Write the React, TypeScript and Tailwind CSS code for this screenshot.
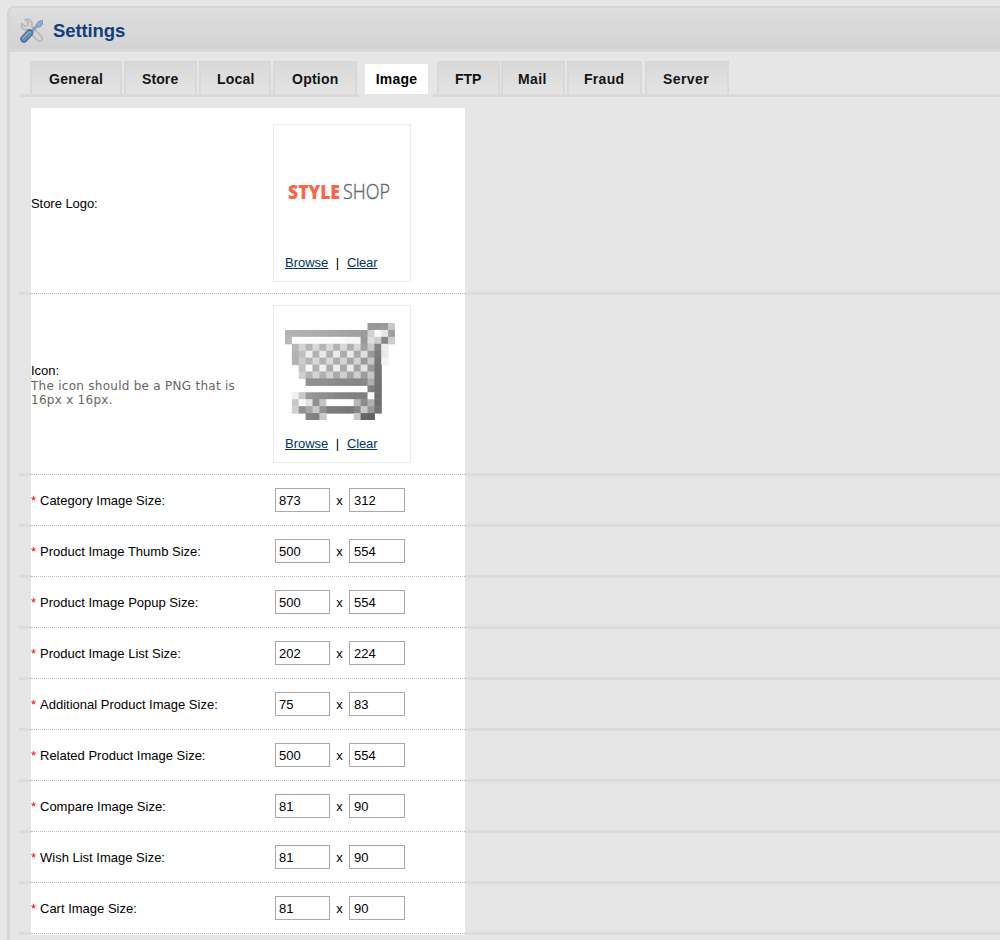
const cartRows: string[] = [
  "-- -- -- -- -- -- -- -- -- -- -- -- 98 98 9a c8",
  "b4 b2 b0 ae ac aa a8 a6 a4 a2 a0 9c d0 f8 e6 a0",
  "b8 fd fd fd fd fd fc fb fa f8 f6 98 de cc 88 cc",
  "-- b8 d4 b6 d8 b4 d8 b2 d8 b0 d6 a0 c8 84 ec --",
  "-- b2 c0 ee b2 ea b0 ea ac e8 a8 e0 9a 7c ea --",
  "-- b2 cc b4 d8 b2 d8 ac d4 a6 d2 9a c6 78 f4 --",
  "-- -- c2 f8 b2 f0 ac ee a8 ea a4 e2 98 76 -- --",
  "-- -- d0 b2 d4 b0 d2 aa d0 a4 ce 9c c6 74 -- --",
  "-- -- -- 90 90 8e 8c 8a 88 88 86 88 b0 72 -- --",
  "-- -- -- -- -- -- -- -- -- -- -- -- 80 72 -- --",
  "-- f0 c8 98 92 8e 8a 86 84 82 80 7e fd 70 -- --",
  "-- c8 fc e4 90 c4 fd fd fd fd b8 8c b0 70 -- --",
  "-- d0 92 a8 c8 92 7c 7a 78 76 88 c8 98 74 -- --",
  "-- -- -- 84 80 c8 -- -- -- -- c8 66 62 -- -- --",
];

function Cart() {
  return (
    <svg className="block h-[97px] w-[110px]" viewBox="0 0 16 14" preserveAspectRatio="none">
      {cartRows.flatMap((row, y) =>
        row.split(" ").map((v, x) =>
          v === "--" ? null : <rect key={`${x}-${y}`} x={x} y={y} width={1.08} height={1.08} fill={`#${v}${v}${v}`} />
        )
      )}
    </svg>
  );
}

function Tools() {
  return (
    <svg className="mt-[4px] h-[28px] w-[26px] shrink-0" viewBox="0 0 26 28" fill="none">
      <path
        d="M6 2.500 L9.500 5.500 L8.500 8.500 L5.500 9 L3 6.500 C1 10 4 13.500 8 12.500 L17.500 22.500 C21 25.500 25 23.500 22.500 19.500 L13 9.500 C14 5 11 1 6 2.500 Z"
        fill="#d6d6d6"
        stroke="#b8b8b8"
        strokeWidth="1.700"
        strokeLinejoin="round"
      />
      <path d="M12 15 L19 8" stroke="#8ba1c0" strokeWidth="3.200" />
      <path d="M17 8 L19.500 4.500 L23.500 3.500 L23.500 7.500 L20.500 10.500 Z" fill="#8fa9cb" stroke="#7f9bc2" strokeLinejoin="round" />
      <path d="M5 22 L10.500 16" stroke="#4f72a2" strokeWidth="7.500" strokeLinecap="round" />
      <path d="M5 21.500 L10.500 16" stroke="#88a5cb" strokeWidth="4" strokeLinecap="round" />
      <path d="M5 22.500 L11 16.500" stroke="#5f82b0" strokeWidth="1.400" strokeLinecap="round" />
    </svg>
  );
}

const tabs = [
  { label: "General", box: "w-[92px] pl-[17px]", text: "tracking-[0.3px]" },
  { label: "Store", box: "ml-[2px] w-[73px] pl-[16px]", text: "tracking-[0.1px]" },
  { label: "Local", box: "ml-[2px] w-[72px] pl-[16px]", text: "tracking-[0.2px]" },
  { label: "Option", box: "ml-[2px] w-[84px] pl-[17px]", text: "tracking-[0.25px]" },
  { label: "Image", box: "", text: "" },
  { label: "FTP", box: "ml-[4px] w-[63px] pl-[16px]", text: "tracking-[-0.1px]" },
  { label: "Mail", box: "ml-px w-[64px] pl-[15px]", text: "tracking-[0.35px]" },
  { label: "Fraud", box: "ml-[2px] w-[75px] pl-[15px]", text: "tracking-[0.3px]" },
  { label: "Server", box: "ml-[3px] w-[84px] pl-[16px]", text: "tracking-[0.4px]" },
];

function Tabs() {
  return (
    <div className="ml-[10px] flex h-[36px] border-b-[3px] border-[#dadada] pl-[10px]">
      {tabs.map((t) =>
        t.label === "Image" ? (
          <div key={t.label} className="-mb-[3px] ml-[2px] flex h-[36px] w-[74px] bg-[#e6e6e6] pl-[6px] pt-[3px]">
            <div className="flex h-[30px] w-[63px] items-center justify-center bg-white text-[14px] font-bold tracking-[0.2px] text-black">
              {t.label}
            </div>
          </div>
        ) : (
          <div
            key={t.label}
            className={`flex h-[33px] items-center whitespace-nowrap border-x-2 border-t-2 border-[#d8d8d8] bg-linear-to-b from-[#d9d9d9] to-[#e4e4e4] pt-[2px] text-[14px] font-bold text-[#151515] ${t.box} ${t.text}`}
          >
            {t.label}
          </div>
        )
      )}
    </div>
  );
}

function Links() {
  return (
    <div className="flex text-[13px] leading-[15px] text-[#003366]">
      <a className="w-[43px] whitespace-nowrap underline">Browse</a>
      <span className="w-[19px] text-center text-black">|</span>
      <a className="whitespace-nowrap tracking-[-0.15px] underline">Clear</a>
    </div>
  );
}

function Row({ height, children }: { height: string; children: React.ReactNode }) {
  return (
    <div className={`flex ${height}`}>
      <div className="ml-[10px] w-[12px] shrink-0 border-b-[3px] border-[#dcdcdc]" />
      <div className="w-[434px] shrink-0 bg-white pb-px">
        <div className="flex h-full items-center border-b border-dotted border-[#bbb]">{children}</div>
      </div>
      <div className="flex-1 border-b-[3px] border-[#dcdcdc]" />
    </div>
  );
}

const sizes: [string, string, string][] = [
  ["Category Image Size:", "873", "312"],
  ["Product Image Thumb Size:", "500", "554"],
  ["Product Image Popup Size:", "500", "554"],
  ["Product Image List Size:", "202", "224"],
  ["Additional Product Image Size:", "75", "83"],
  ["Related Product Image Size:", "500", "554"],
  ["Compare Image Size:", "81", "90"],
  ["Wish List Image Size:", "81", "90"],
  ["Cart Image Size:", "81", "90"],
];

export default function App() {
  return (
    <div className="h-[940px] w-[1000px] overflow-hidden bg-[#e6e6e6] pl-[7px] pt-[6px] font-['Liberation_Sans',Arial,sans-serif] text-[13px] text-black">
      <div className="h-[950px] w-[1010px] rounded-tl-[7px] border-l-[3px] border-t-[2px] border-[#d5d5d5] bg-[#e6e6e6]">
        <div className="flex h-[44px] items-center rounded-tl-[5px] border-b-[3px] border-[#d8d8d8] bg-linear-to-b from-[#dedede] to-[#d3d3d3] pl-[9px]">
          <Tools />
          <h1 className="ml-[8px] pt-[4px] text-[18.500px] font-bold tracking-[-0.1px] text-[#123e80]">Settings</h1>
        </div>
        <div className="pt-[9px]">
          <Tabs />
        </div>
        <div className="-ml-px pt-[11px]">
          <Row height="h-[187px]">
            <div className="w-[242px] pt-[6px] tracking-[-0.05px]">Store Logo:</div>
            <div className="mt-[5px] h-[158px] w-[138px] border border-[#ececec] pl-[11px]">
              <div className="flex h-[130px] items-center pl-[3px] pt-[3px]">
                <svg className="h-[36px] w-[110px]" viewBox="0 0 110 36">
                  <text x="0" y="25" fontFamily="Open Sans, sans-serif" fontWeight="800" fontSize="19.5" textLength="52" lengthAdjust="spacingAndGlyphs" fill="#ff6347">STYLE</text>
                  <text x="55" y="25" fontFamily="Open Sans, sans-serif" fontWeight="300" fontSize="19.5" textLength="47" lengthAdjust="spacingAndGlyphs" fill="#626a6e" stroke="#626a6e" strokeWidth="0.4">SHOP</text>
                </svg>
              </div>
              <Links />
            </div>
          </Row>
          <Row height="h-[181px]">
            <div className="w-[242px]">
              <div className="pb-px leading-[15px]">Icon:</div>
              <div className="w-[225px] font-['DejaVu_Sans',Verdana,sans-serif] text-[12px] leading-[14px] tracking-[0.27px] text-[#666]">
                The icon should be a PNG that is 16px x 16px.
              </div>
            </div>
            <div className="mb-[1px] h-[158px] w-[138px] border border-[#ececec] pl-[11px] pt-[17px]">
              <Cart />
              <div className="pt-[16px]">
                <Links />
              </div>
            </div>
          </Row>
          {sizes.map(([label, w, h]) => (
            <Row key={label} height="h-[51px]">
              <div className="flex w-[244px]">
                <span className="w-[9px] text-[#ff0000]">*</span>
                {label}
              </div>
              <div className="mb-px flex items-center">
                <div className="flex h-[24px] w-[55px] items-center border border-[#a9a9a9] pl-[3px] pt-px">{w}</div>
                <span className="w-[19px] pt-px text-center">x</span>
                <div className="flex h-[24px] w-[56px] items-center border border-[#a9a9a9] pl-[4px] pt-px">{h}</div>
              </div>
            </Row>
          ))}
        </div>
      </div>
    </div>
  );
}
